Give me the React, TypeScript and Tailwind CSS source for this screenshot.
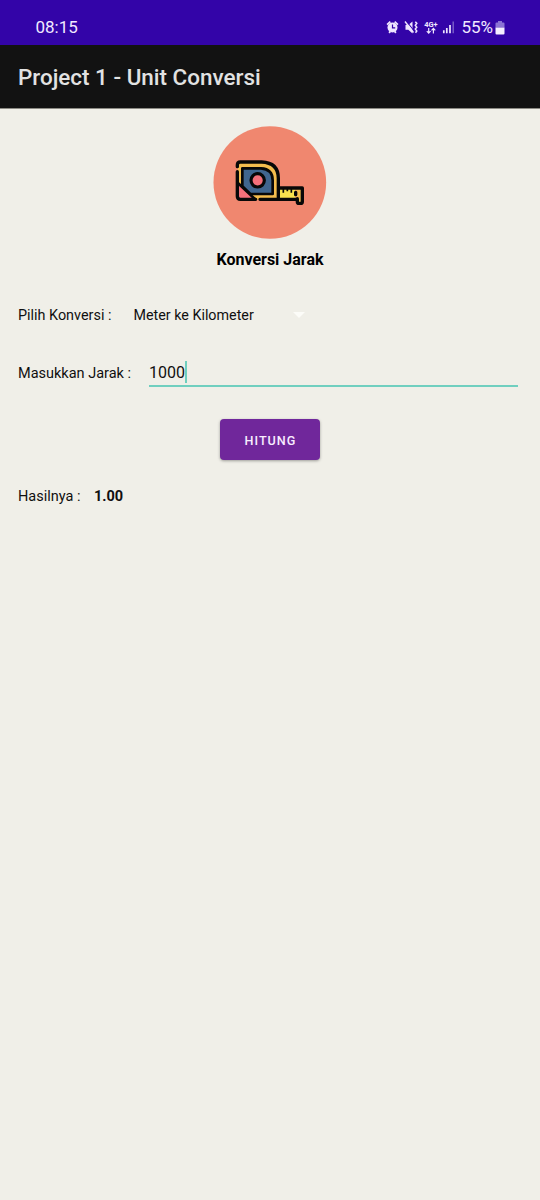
function StatusIcons() {
  return (
    <svg width="68" height="16" viewBox="385.5 19 68 16" fill="none" className="block">
      <circle cx="392" cy="27.500" r="5" fill="#efe6ff" />
      <path d="M386.600 24.600l3.200-3M397.400 24.600l-3.200-3M388.600 32.800l1.200-1.400M395.400 32.800l-1.200-1.400" stroke="#efe6ff" strokeWidth="1.800" />
      <path d="M392 24.500v3.400h2.700" stroke="#3304a8" strokeWidth="1.200" />
      <path d="M405 25h2.800l4.200-3.500v12l-4.200-3.700H405z" fill="#efe6ff" />
      <path d="M405.400 20.500l9 11.500" stroke="#3304a8" strokeWidth="1.200" />
      <path d="M404.500 21.500l8.500 11" stroke="#efe6ff" strokeWidth="1.400" />
      <path d="M414.800 21.800l1.500 1.600-1.500 1.900 1.500 1.900-1.500 1.900 1.500 1.900-1.300 1.700" stroke="#efe6ff" strokeWidth="1.500" />
      <text x="423.700" y="26.600" fill="#efe6ff" fontFamily="Roboto, sans-serif" fontSize="7.500" fontWeight="700" textLength="13.500" lengthAdjust="spacingAndGlyphs">4G+</text>
      <path d="M428.200 28v5M426.300 31.200l1.900 1.900 1.900-1.900M432.900 33.500v-5M431 30.300l1.900-1.900 1.900 1.900" stroke="#efe6ff" strokeWidth="1.200" />
      <path d="M443.300 30.300v2.900M446.300 28V33.200M449.500 25V33.200" stroke="#efe6ff" strokeWidth="1.700" />
      <path d="M452.700 21.500V33.200" stroke="#8267cd" strokeWidth="1.300" />
    </svg>
  );
}

function BatteryIcon() {
  return (
    <svg width="10" height="14" viewBox="0 0 10 14" className="block">
      <path d="M3 0h4v1.500h1.500Q9.500 1.500 9.500 2.500V6.500H.5v-4q0-1 1-1H3z" fill="#8b72d4" />
      <path d="M.5 6.500h9V12.500q0 1-1 1h-7q-1 0-1-1z" fill="#f5efff" />
    </svg>
  );
}

function TapeMeasure() {
  return (
    <svg width="114" height="113" viewBox="-51 -71 342 339" fill="none" className="block">
      <circle cx="119.500" cy="98.500" r="169" fill="#f0876f" />
      <path d="M23 59V46q0-8 8-8h64q50 2 50 48v64H70L23 105z" fill="#f4bd4e" />
      <path d="M23 100l54 50H31q-8 0-8-8z" fill="#f5707a" />
      <path d="M37 56h56q35 2 35 36v41H61L37 110z" fill="#40668f" stroke="#080808" strokeWidth="8" strokeLinejoin="round" />
      <path d="M23 99l54 51" stroke="#080808" strokeWidth="8" />
      <circle cx="83" cy="92" r="20" fill="#f5707a" stroke="#080808" strokeWidth="9.500" />
      <path d="M149 117h47v30h-47z" fill="#f8e34f" />
      <path d="M199 117h18v41h-14v-12h-4z" fill="#f4bd4e" />
      <path d="M22 51v-5q0-9 9-9h64q50 2 50 49v63M22 66v74q0 9 9 9h46M90 149h112M145 115h72v41q0 5-5 5h-5q-5 0-5-5v-9M197 128v7" stroke="#080808" strokeWidth="10" strokeLinecap="round" strokeLinejoin="round" />
      <path d="M160 116v13M172 116v9M184 116v13" stroke="#080808" strokeWidth="5" />
    </svg>
  );
}

export default function App() {
  return (
    <div className="flex h-[1200px] w-[540px] flex-col overflow-hidden bg-[#f0efe8] font-['Roboto',sans-serif] whitespace-nowrap text-[#101010]">
      <header>
        <div className="flex h-[45px] items-start justify-between bg-[#3304a8] pt-[17px] pr-[35px] pl-[35.500px] text-[#f1eaff]">
          <span className="text-[17px] leading-5">08:15</span>
          <div className="flex items-start">
            <div className="pt-[2px]"><StatusIcons /></div>
            <span className="ml-[7px] text-[17px] leading-5">55%</span>
            <div className="ml-[2px] pt-[4px]"><BatteryIcon /></div>
          </div>
        </div>
        <div className="flex h-16 items-center border-b border-[#8c8b84] bg-[#121212] pt-[3px] pl-[18px]">
          <h1 className="text-[22.450px] font-medium text-[#e2e2e2]">Project 1 - Unit Conversi</h1>
        </div>
      </header>
      <main className="flex flex-col px-[18px] pt-[17px]">
        <div className="flex flex-col items-center">
          <TapeMeasure />
          <h2 className="mt-[11px] text-[16px] leading-5 font-bold text-black">Konversi Jarak</h2>
        </div>
        <div className="mt-[35px] flex h-5 items-center text-[14.400px]">
          <span className="w-[115.500px] pt-[2px]">Pilih Konversi :</span>
          <button className="flex w-[171px] items-center justify-between">
            <span className="pt-[2px] text-[14.300px]">Meter ke Kilometer</span>
            <svg width="12" height="6" viewBox="0 0 12 6"><path d="M0 0h12L6 6z" fill="#fcfcf8" /></svg>
          </button>
        </div>
        <div className="mt-[36px] flex h-[27px] items-start text-[14.500px]">
          <span className="w-[131px] pt-[3px] leading-5">Masukkan Jarak :</span>
          <div className="flex h-[26px] w-[369px] items-start border-b-2 border-[#70cfbf]">
            <span className="pt-[1px] text-[16px] leading-[22px]">1000</span>
            <span className="h-[22px] w-[2px] bg-[#70cfbf]" />
          </div>
        </div>
        <button className="mt-[31px] h-[41px] w-[100px] self-center rounded-[4px] bg-[#70279b] pt-[3px] pl-[1px] text-[12.600px] font-medium tracking-[1px] text-[#f8edff] shadow-[0_1px_3px_rgba(0,0,0,0.35)]">HITUNG</button>
        <div className="mt-[26px] flex h-5 items-center pt-[2px] text-[14.500px]">
          <span className="w-[76px]">Hasilnya :</span>
          <span className="font-bold">1.00</span>
        </div>
      </main>
    </div>
  );
}
